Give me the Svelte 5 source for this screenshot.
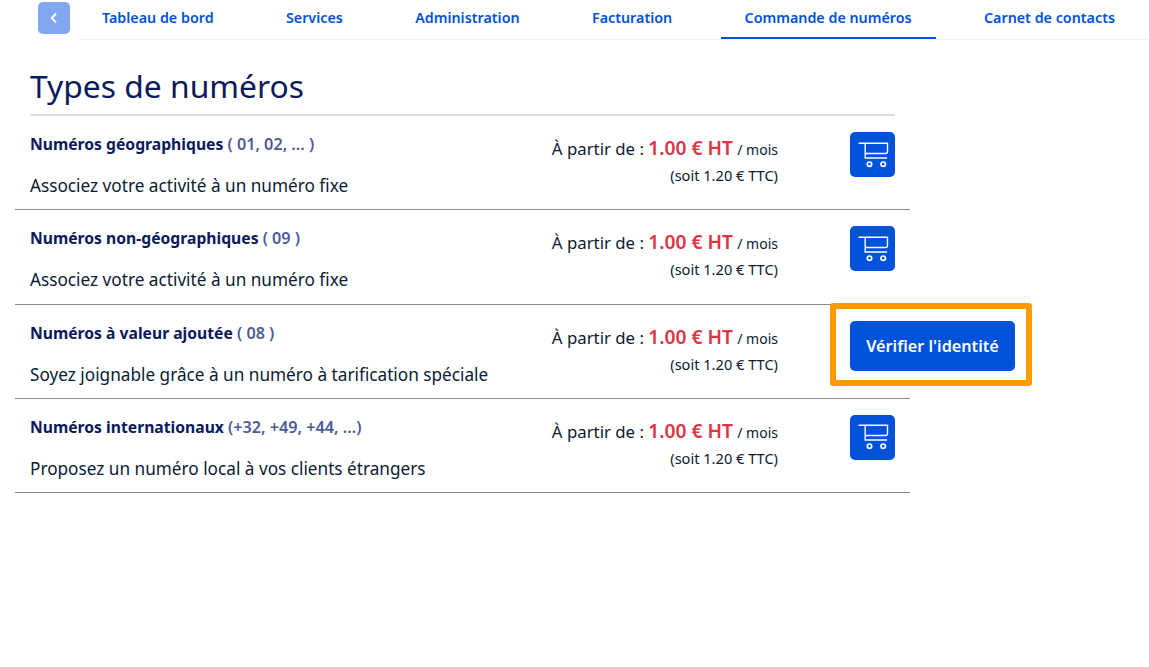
<script>
  const tabs = [
    { label: 'Tableau de bord' },
    { label: 'Services' },
    { label: 'Administration' },
    { label: 'Facturation' },
    { label: 'Commande de numéros', active: true },
    { label: 'Carnet de contacts' }
  ];

  const types = [
    { name: 'Numéros géographiques', hint: '( 01, 02, ... )', text: 'Associez votre activité à un numéro fixe' },
    { name: 'Numéros non-géographiques', hint: '( 09 )', text: 'Associez votre activité à un numéro fixe' },
    { name: 'Numéros à valeur ajoutée', hint: '( 08 )', text: 'Soyez joignable grâce à un numéro à tarification spéciale', verify: true },
    { name: 'Numéros internationaux', hint: '(+32, +49, +44, ...)', text: 'Proposez un numéro local à vos clients étrangers' }
  ];
</script>

<div class="page">
  <div class="topbar">
    <button class="back" aria-label="Retour">
      <svg width="8" height="12" viewBox="0 0 8 12"><path d="M6 1.5 1.8 6 6 10.5" fill="none" stroke="#fff" stroke-width="2" /></svg>
    </button>
    <nav>
      {#each tabs as tab}
        <a href="#top" class:active={tab.active}>{tab.label}</a>
      {/each}
    </nav>
  </div>

  <main>
    <h1>Types de numéros</h1>
    {#each types as type}
      <div class="row">
        <div class="info">
          <div class="name"><b>{type.name}</b> <span>{type.hint}</span></div>
          <p>{type.text}</p>
        </div>
        <div class="price">
          <div class="from">À partir de : <strong>1.00 € HT</strong> <small>/ mois</small></div>
          <div class="ttc">(soit 1.20 € TTC)</div>
        </div>
        <div class="action">
          {#if type.verify}
            <div class="highlight">
              <button class="verify">Vérifier l'identité</button>
            </div>
          {:else}
            <button class="cart" aria-label="Commander">
              <svg width="32" height="28" viewBox="0 0 32 28" fill="none" stroke="#fff" stroke-width="1.4">
                <path d="M1.5 2.2H30.5V10.5q0 2-2 2H8.5" />
                <path d="M8.2 2.2V17H30" />
                <circle cx="12.5" cy="23.2" r="2.2" stroke-width="1.7" />
                <circle cx="26.2" cy="23.2" r="2.2" stroke-width="1.7" />
              </svg>
            </button>
          {/if}
        </div>
      </div>
    {/each}
  </main>
</div>

<style>
  :global(body) {
    margin: 0;
    background: #fff;
  }

  .page {
    font-family: "Noto Sans", Arial, sans-serif;
    color: #0a1b33;
    height: 667px;
    overflow: hidden;
  }

  .topbar {
    display: flex;
    align-items: flex-start;
    padding: 2px 10px 0 38px;
  }

  .back {
    flex: none;
    width: 32px;
    height: 32px;
    padding: 0;
    border: none;
    border-radius: 5px;
    background: #82a6ef;
    display: flex;
    align-items: center;
    justify-content: center;
    margin-right: 8px;
  }

  nav {
    flex: 1;
    display: flex;
    justify-content: space-between;
    margin-right: -10px;
    padding-right: 10px;
    height: 37px;
    border-bottom: 1px solid #eef3fa;
  }

  nav a {
    height: 35px;
    padding: 0 24px;
    line-height: 31px;
    font-size: 14.3px;
    font-weight: 600;
    color: #0052d9;
    text-decoration: none;
    white-space: nowrap;
  }

  nav a.active {
    border-bottom: 2px solid #0052d9;
  }

  main {
    width: 895px;
    margin-left: 15px;
  }

  h1 {
    margin: 0 15px;
    padding: 23px 0 6px;
    height: 45px;
    font-size: 31.8px;
    line-height: 45px;
    font-weight: 400;
    color: #0a1a5c;
    border-bottom: 2px solid #ddd;
  }

  .row {
    display: grid;
    grid-template-columns: minmax(0, 1fr) auto 45px;
    column-gap: 72px;
    height: 94.3px;
    box-sizing: border-box;
    padding: 16px 15px 0;
    border-bottom: 1px solid #8a8a8a;
  }

  .name {
    font-size: 15.7px;
    line-height: 24px;
    white-space: nowrap;
  }

  .name b {
    font-weight: 700;
    color: #0a1a5c;
  }

  .name span {
    font-size: 16.2px;
    font-weight: 600;
    color: #4b5c97;
  }

  .info p {
    margin: 18px 0 0;
    font-size: 17.2px;
    line-height: 24px;
    white-space: nowrap;
  }

  .price {
    text-align: right;
    font-size: 16.8px;
    white-space: nowrap;
  }

  .from {
    line-height: 32.4px;
  }

  .from strong {
    font-size: 19.2px;
    font-weight: 600;
    color: #dc3545;
  }

  .from small {
    font-size: 14px;
  }

  .ttc {
    margin-top: -0.4px;
    font-size: 14.6px;
    line-height: 19px;
  }

  .action {
    position: relative;
  }

  .cart {
    display: flex;
    align-items: center;
    justify-content: center;
    width: 45px;
    height: 45px;
    padding: 0;
    border: none;
    border-radius: 5px;
    background: #0052d9;
  }

  .highlight {
    position: absolute;
    left: -20px;
    top: -18px;
    width: 165px;
    padding: 12px 11px 9px 14px;
    border: 6px solid #ff9a00;
    border-radius: 3px;
    background: #fff;
  }

  .verify {
    display: block;
    width: 165px;
    height: 50px;
    padding: 0;
    border: none;
    border-radius: 5px;
    background: #0052d9;
    color: #fff;
    font-family: inherit;
    font-size: 16.2px;
    font-weight: 600;
    white-space: nowrap;
  }
</style>
